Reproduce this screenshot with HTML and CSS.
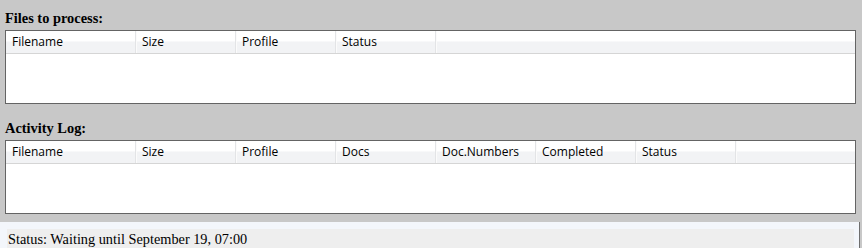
FILE: index.html
```html
<!DOCTYPE html>
<html>
<head>
<meta charset="utf-8">
<link rel="stylesheet" href="styles.css">
</head>
<body>
<div class="app">
  <section class="group">
    <h2 class="title">Files to process:</h2>
    <div class="list">
      <div class="head">
        <div class="col c1">Filename</div>
        <div class="col">Size</div>
        <div class="col">Profile</div>
        <div class="col">Status</div>
        <div class="fill"></div>
      </div>
    </div>
  </section>
  <section class="group second">
    <h2 class="title">Activity Log:</h2>
    <div class="list">
      <div class="head">
        <div class="col c1">Filename</div>
        <div class="col">Size</div>
        <div class="col">Profile</div>
        <div class="col">Docs</div>
        <div class="col">Doc.Numbers</div>
        <div class="col">Completed</div>
        <div class="col">Status</div>
        <div class="fill"></div>
      </div>
    </div>
  </section>
</div>
<div class="statusbar">
  <div class="status-inner">Status: Waiting until September 19, 07:00</div>
</div>
</body>
</html>
```
FILE: styles.css
```css
html, body {
  margin: 0;
  padding: 0;
  background: #c8c8c8;
  width: 862px;
  height: 248px;
  overflow: hidden;
}
.app {
  padding: 10px 6px 0 5px;
}
.group.second {
  margin-top: 16px;
}
.title {
  margin: 0 0 3px 0;
  font-family: "Liberation Serif", "Times New Roman", serif;
  font-weight: bold;
  font-size: 14.4px;
  line-height: 17px;
  color: #000;
}
.list {
  height: 72px;
  border: 1px solid #646464;
  background: #fff;
}
.head {
  display: flex;
  height: 22px;
  border-bottom: 1px solid #d5d5d5;
  background: linear-gradient(#ffffff 0%, #ffffff 45%, #f2f3f5 50%, #f2f3f5 100%);
  font-family: "Open Sans", "Noto Sans", sans-serif;
  font-size: 12px;
  color: #000;
}
.col {
  width: 100px;
  box-sizing: border-box;
  padding-left: 6px;
  line-height: 22px;
  border-right: 1px solid #e3e4e6;
  box-shadow: 1px 0 0 #fbfbfb;
  flex: none;
}
.col.c1 {
  width: 130px;
}
.fill {
  flex: 1;
}
.statusbar {
  position: absolute;
  left: 0;
  top: 222px;
  width: 860px;
  height: 26px;
  border-right: 1px solid #6e6e6e;
  background: #f3f6fb;
  padding: 7px 0 0 7px;
  box-sizing: border-box;
}
.status-inner {
  margin-right: 5px;
  background: #eeeeee;
  height: 19px;
  font-family: "Liberation Serif", "Times New Roman", serif;
  font-size: 14.3px;
  line-height: 20px;
  padding-left: 1px;
  color: #000;
}
```
